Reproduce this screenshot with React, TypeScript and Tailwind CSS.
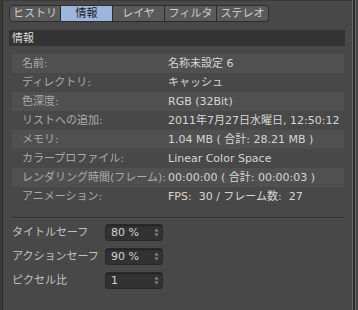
import React from "react";

const rows: [string, string][] = [
  ["名前:", "名称未設定 6"],
  ["ディレクトリ:", "キャッシュ"],
  ["色深度:", "RGB (32Bit)"],
  ["リストへの追加:", "2011年7月27日水曜日, 12:50:12"],
  ["メモリ:", "1.04 MB ( 合計: 28.21 MB )"],
  ["カラープロファイル:", "Linear Color Space"],
  ["レンダリング時間(フレーム):", "00:00:00 ( 合計: 00:00:03 )"],
  ["アニメーション:", "FPS:  30 / フレーム数:  27"],
];

const tabs = ["ヒストリ", "情報", "レイヤ", "フィルタ", "ステレオ"];

const inputs: [string, string][] = [
  ["タイトルセーフ", "80 %"],
  ["アクションセーフ", "90 %"],
  ["ピクセル比", "1"],
];

function Spinner() {
  return (
    <svg width="5" height="9" viewBox="0 0 5 9" className="shrink-0">
      <path d="M2.5 0.5 L4.5 3.5 L0.5 3.5 Z" fill="#8a8a8a" />
      <path d="M2.5 8.5 L4.5 5.5 L0.5 5.5 Z" fill="#8a8a8a" />
    </svg>
  );
}

export default function App() {
  return (
    <div
      className="w-[358px] h-[310px] flex bg-[#3c3c3c] overflow-hidden text-[11px] leading-none"
      style={{ fontFamily: '"DejaVu Sans", "Noto Sans CJK JP", sans-serif' }}
    >
      <div className="w-[2px] bg-[#3a3a3a]" />
      <div className="w-px bg-[#2a2a2a]" />
      <div className="flex-1 bg-[#484848] flex flex-col pl-[6px] pt-[4px] border-t border-[#3a3a3a]">
        {/* tabs */}
        <div className="flex h-[17px]">
          {tabs.map((t, i) => {
            const sel = i === 1;
            const first = i === 0;
            const last = i === tabs.length - 1;
            return (
              <div
                key={t}
                className={`w-[52px] h-[17px] flex items-center justify-center border-y border-[#2c2c2c] ${
                  first ? "border-l rounded-l-[4px]" : ""
                } ${last ? "border-r rounded-r-[4px]" : "border-r"} ${
                  sel ? "bg-[#9db4dc] text-[#1c1c1c]" : "bg-[#5a5a5a] text-[#cfcfcf]"
                }`}
              >
                {t}
              </div>
            );
          })}
        </div>

        {/* header */}
        <div className="mt-[8px] mr-[7px] h-[16px] bg-[#333333] flex items-center pl-[3px] text-[#dcdcdc]">
          情報
        </div>

        {/* info rows */}
        <div className="mt-[8px] ml-[3px] mr-[8px] flex flex-col">
          {rows.map(([k, v], i) => (
            <div
              key={k}
              className={`h-[19px] flex items-center ${i % 2 === 0 ? "bg-[#505050]" : ""}`}
            >
              <div className="w-[156px] pl-[10px] text-[#ababab] whitespace-nowrap">{k}</div>
              <div className="text-[#d6d6d6] whitespace-pre">{v}</div>
            </div>
          ))}
        </div>

        {/* separator */}
        <div className="mt-[11px] ml-[3px] mr-[8px] h-px bg-[#2c2c2c]" />
        <div className="ml-[3px] mr-[8px] h-px bg-[#525252]" />

        {/* inputs */}
        <div className="mt-[5px] ml-[3px] flex flex-col gap-[7px]">
          {inputs.map(([k, v]) => (
            <div key={k} className="flex items-center h-[17px]">
              <div className="w-[93px] text-[#c2c2c2] whitespace-nowrap">{k}</div>
              <div className="w-[58px] h-[17px] rounded-[3px] bg-[#323232] border border-[#2a2a2a] shadow-[inset_0_1px_1px_rgba(0,0,0,0.35)] flex items-center pl-[5px] pr-[3px] text-[#d2d2d2]">
                <span className="flex-1">{v}</span>
                <Spinner />
              </div>
            </div>
          ))}
        </div>
      </div>
      <div className="w-px bg-[#6a6a6a]" />
      <div className="w-[2px] bg-[#2e2e2e]" />
      <div className="w-px bg-[#686868]" />
      <div className="w-[2px] bg-[#474747]" />
    </div>
  );
}
